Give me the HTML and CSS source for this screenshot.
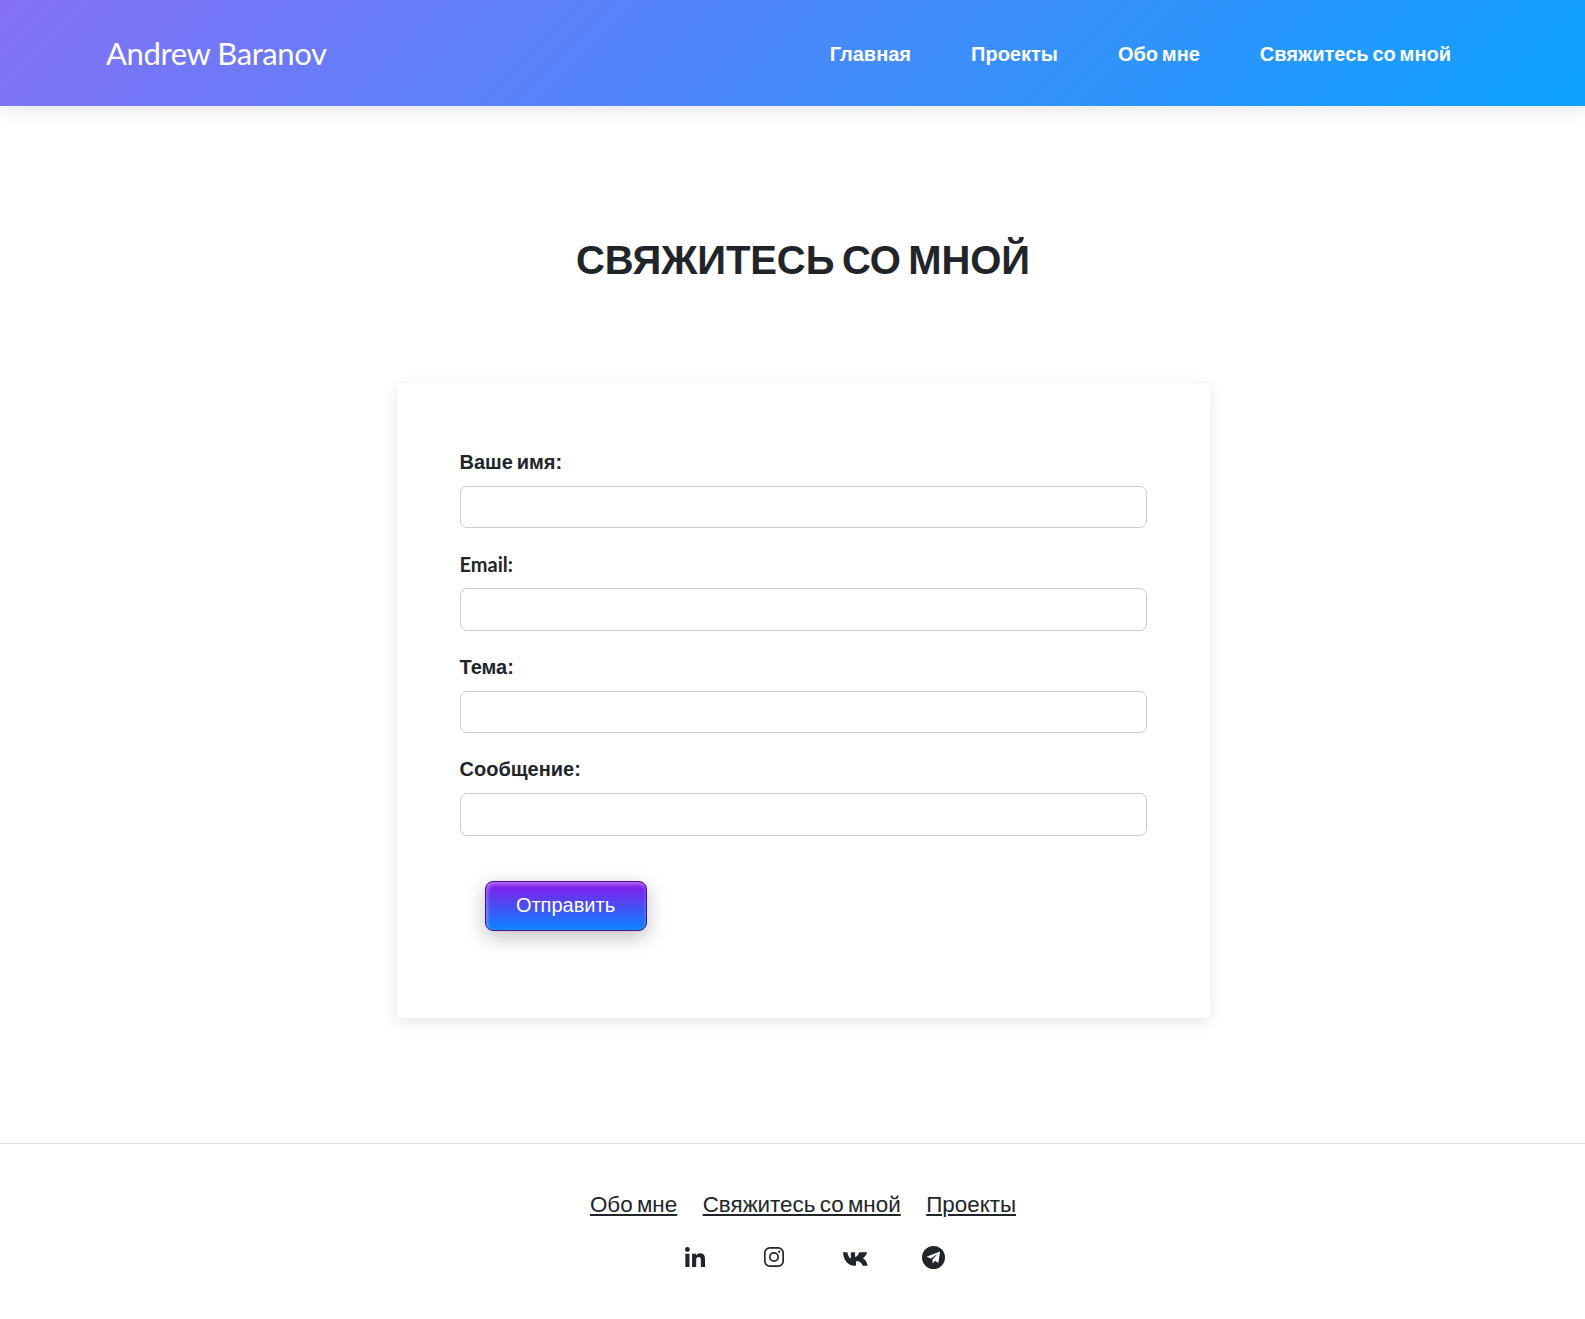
FILE: index.html
```html
<!DOCTYPE html>
<html lang="ru">
<head>
  <meta charset="UTF-8" />
  <meta name="viewport" content="width=device-width, initial-scale=1.0"/>
  <title>Andrew Baranov</title>
  <link rel="stylesheet" href="styles.css">
</head>
<body>

  <header class="top-bar">
    <a class="logo" href="#">Andrew Baranov</a>
    <nav class="nav">
      <a href="#">Главная</a>
      <a href="#">Проекты</a>
      <a href="#">Обо мне</a>
      <a href="#">Свяжитесь со мной</a>
    </nav>
  </header>

  <main class="content">
    <h1 class="page-title">Свяжитесь со мной</h1>

    <form class="contact-card">
      <div class="field">
        <label for="name">Ваше имя:</label>
        <input id="name" type="text" />
      </div>
      <div class="field">
        <label class="latin" for="email">Email:</label>
        <input id="email" type="email" />
      </div>
      <div class="field">
        <label for="subject">Тема:</label>
        <input id="subject" type="text" />
      </div>
      <div class="field">
        <label for="message">Сообщение:</label>
        <input id="message" type="text" />
      </div>
      <button class="send-btn" type="button">Отправить</button>
    </form>
  </main>

  <footer class="footer">
    <div class="footer-links">
      <a href="#">Обо мне</a>
      <a href="#">Свяжитесь со мной</a>
      <a href="#">Проекты</a>
    </div>
    <div class="socials">
      <a href="#" aria-label="LinkedIn">
        <svg class="icon icon-in" viewBox="0 0 448 448"><path d="M100.28 448H7.4V148.9h92.88zM53.79 108.1C24.09 108.1 0 83.5 0 53.8a53.79 53.79 0 0 1 107.58 0c0 29.7-24.1 54.3-53.79 54.3zM447.9 448h-92.68V302.4c0-34.7-.7-79.2-48.29-79.2-48.29 0-55.69 37.7-55.69 76.7V448h-92.78V148.9h89.08v40.8h1.3c12.4-23.5 42.69-48.3 87.88-48.3 94 0 111.28 61.9 111.28 142.3V448z"/></svg>
      </a>
      <a href="#" aria-label="Instagram">
        <svg class="icon icon-ig" viewBox="0 0 24 24"><rect class="line" x="1" y="1" width="22" height="22" rx="6"/><circle class="line" cx="12" cy="12" r="5"/><circle cx="18.300" cy="5.700" r="1.400"/></svg>
      </a>
      <a href="#" aria-label="VK">
        <svg class="icon icon-vk" viewBox="0 1 26 14"><path d="M0 1h4.600c.4 3.500 2 6 3.600 6.600V1h4.400v5c1.800-.4 3.400-2.600 4.200-5H25c-.6 2.900-2.600 5.200-4.300 6.200 1.900 1 4.100 3.300 5 7.800h-5.200c-.8-2.500-2.600-4.300-4.900-4.600-.8-.1-1.700-.1-2.100-.1V15h-1.500C5.200 15 .4 9.200 0 1z"/></svg>
      </a>
      <a href="#" aria-label="Telegram">
        <svg class="icon icon-tg" viewBox="0 0 24 24"><circle cx="12" cy="12" r="12"/><path class="plane" d="M18.900 5.800 4.700 11.300l4.600 1.700 7-4.800-5.300 5.800v4.300l2.700-2.900 3.300 2.400z"/></svg>
      </a>
    </div>
  </footer>

</body>
</html>
```

FILE: styles.css
```css
* {
  box-sizing: border-box;
}

body {
  margin: 0;
  background-color: #fff;
  color: #212529;
  font-family: "Liberation Sans", Arial, sans-serif;
}

a {
  color: inherit;
}

.top-bar {
  display: flex;
  justify-content: space-between;
  align-items: center;
  height: 106px;
  padding: 0 134px 0 106px;
  background: linear-gradient(135deg, #8570f6 0%, #0ca2ff 100%);
  box-shadow: 0 4px 20px rgba(0, 0, 0, 0.1);
}

.logo {
  color: #fff;
  font-family: Lato, sans-serif;
  font-size: 31px;
  letter-spacing: -0.4px;
  text-decoration: none;
}

.nav {
  display: flex;
  gap: 60px;
  padding-top: 2px;
}

.nav a {
  color: #fff;
  font-size: 20px;
  font-weight: bold;
  word-spacing: -0.085em;
  text-decoration: none;
}

.content {
  padding: 127px 0 125px 21px;
}

.page-title {
  margin: 0 0 96px;
  font-size: 40px;
  line-height: 54px;
  letter-spacing: -0.1px;
  word-spacing: -0.085em;
  text-align: center;
  text-transform: uppercase;
}

.contact-card {
  width: 813px;
  height: 635px;
  margin: 0 auto;
  padding: 66px 63px;
  background-color: #fff;
  border-radius: 3px;
  box-shadow: 0 4px 16px rgba(0, 0, 0, 0.1);
}

.field {
  margin-bottom: 23px;
}

.field label {
  display: block;
  margin-bottom: 10px;
  font-size: 20px;
  font-weight: bold;
  line-height: 27px;
  word-spacing: -0.085em;
}

.field .latin {
  font-family: Lato, sans-serif;
}

.field input {
  display: block;
  width: 100%;
  height: 42.4px;
  border: 1px solid #ccc;
  border-radius: 7px;
  background-color: #fff;
}

.send-btn {
  display: block;
  width: 162px;
  height: 50px;
  margin: 45px 0 0 25px;
  border: 1px solid #4a0a8c;
  border-radius: 8px;
  background: linear-gradient(180deg, #8a16ea 0%, #0a84ff 100%);
  box-shadow: 0 6px 20px rgba(0, 0, 0, 0.25), inset 1px 2px 4px rgba(255, 255, 255, 0.45);
  color: #fff;
  font-family: "Liberation Sans", Arial, sans-serif;
  font-size: 20px;
}

.footer {
  padding: 46px 0 0 21px;
  border-top: 1px solid #dee2e6;
  text-align: center;
}

.footer-links {
  display: flex;
  justify-content: center;
  gap: 25.5px;
  font-size: 22.4px;
  line-height: 30px;
  word-spacing: -0.085em;
}

.socials {
  display: flex;
  justify-content: center;
  align-items: center;
  height: 24px;
  margin-top: 25px;
  padding-left: 80px;
}

.socials a {
  display: flex;
  width: 79px;
}

.icon {
  display: block;
  fill: #212529;
}

.icon .line {
  fill: none;
  stroke: #212529;
  stroke-width: 2;
}

.icon .plane {
  fill: #fff;
}

.icon-in,
.icon-ig {
  width: 20px;
  height: 20px;
}

.icon-vk {
  width: 25px;
  height: 14px;
  margin-top: 3px;
}

.icon-tg {
  width: 23px;
  height: 23px;
}
```
